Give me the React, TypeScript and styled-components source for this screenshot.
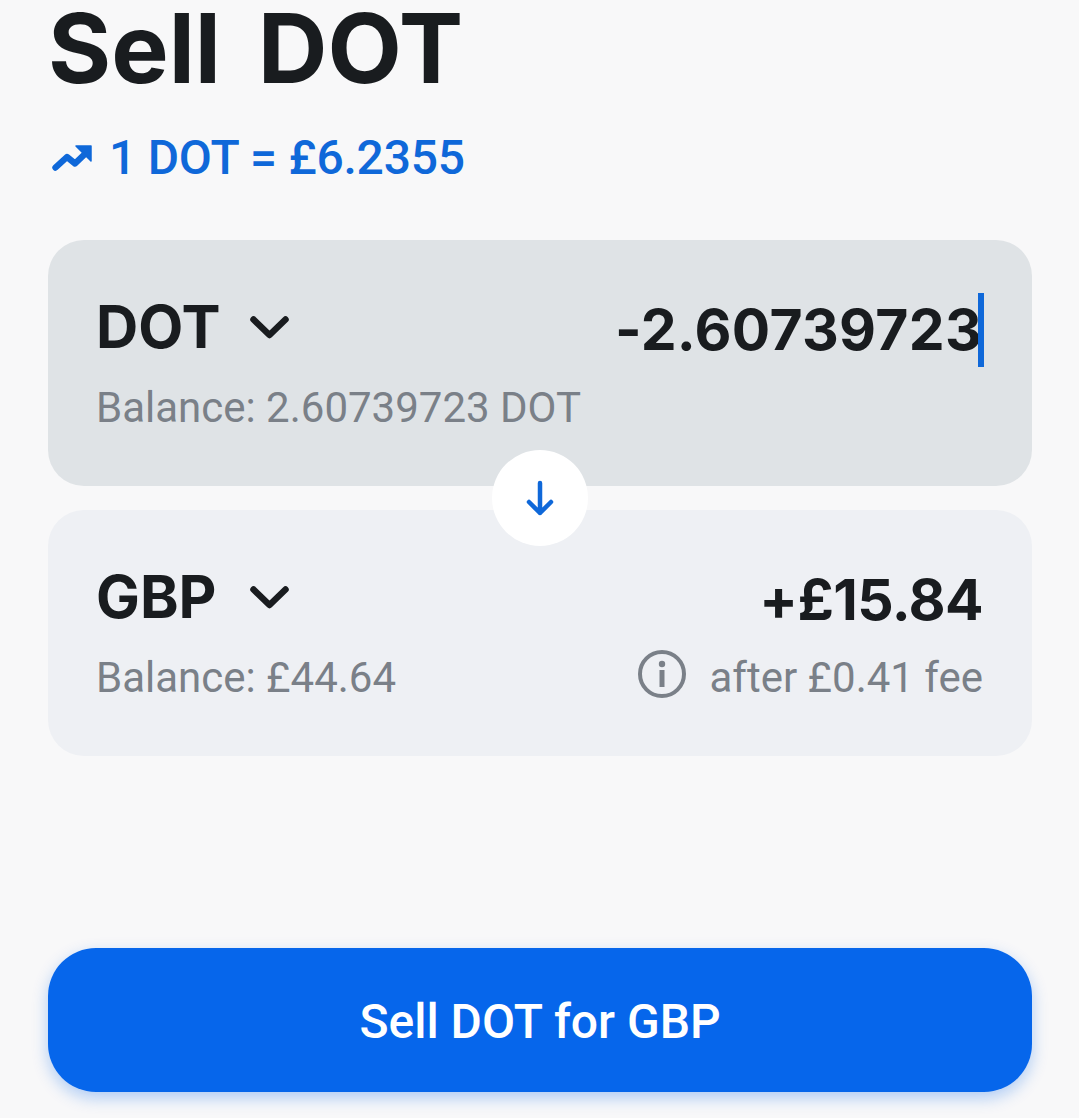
import React from "react";
import styled, { createGlobalStyle } from "styled-components";

const Global = createGlobalStyle`
  html, body { margin: 0; padding: 0; background: #f8f8f9; height: 100%; overflow: hidden; }
`;

const Page = styled.main`
  box-sizing: border-box;
  width: 1079px;
  height: 1118px;
  padding: 0 47px 0 48px;
  display: flex;
  flex-direction: column;
  overflow: hidden;
`;

const Title = styled.h1`
  margin: 0;
  height: 96px;
  font: 700 96.5px/96px Inter, sans-serif;
  word-spacing: 14px;
  color: #191c1f;
`;

const Rate = styled.div`
  margin-top: 32px;
  height: 60px;
  display: flex;
  align-items: center;
  gap: 17px;
  font: 500 48px/60px Roboto, sans-serif;
  letter-spacing: -0.25px;
  color: #0f68d9;
  padding-left: 4px;
`;

const Exchange = styled.section`
  position: relative;
  margin-top: 52px;
  display: flex;
  flex-direction: column;
  gap: 24px;
`;

const Card = styled.div<{ $active?: boolean }>`
  box-sizing: border-box;
  height: 246px;
  padding: 50px 49px 0 48px;
  border-radius: 36px;
  background: ${(p) => (p.$active ? "#dfe3e6" : "#eef0f4")};
  display: flex;
  flex-direction: column;
  gap: 16px;
`;

const Row = styled.div`
  display: flex;
  justify-content: space-between;
  align-items: flex-start;
`;

const Currency = styled.div`
  display: flex;
  align-items: center;
  gap: 32px;
  font: 700 58.5px/74px Inter, sans-serif;
  color: #191c1f;
`;

const CurrencyName = styled.span`
  width: 122px;
`;

const Amount = styled.div<{ $editing?: boolean }>`
  position: relative;
  margin-top: 3px;
  font: 700 57px/74px Inter, sans-serif;
  letter-spacing: ${(p) => (p.$editing ? "0.3px" : "-0.6px")};
  padding-right: ${(p) => (p.$editing ? "1px" : "0")};
  color: #191c1f;
`;

const Caret = styled.span`
  position: absolute;
  top: 0;
  right: -1px;
  width: 6px;
  height: 74px;
  background: #0f68d9;
`;

const Muted = styled.div`
  font: 400 42px/50px Roboto, sans-serif;
  color: #7a8088;
`;

const Fee = styled(Muted)`
  display: flex;
  align-items: flex-start;
  gap: 24px;
`;

const InfoIcon = styled.svg`
  margin-top: -3px;
`;

const SwapBadge = styled.div`
  position: absolute;
  left: 444px;
  top: 210px;
  width: 96px;
  height: 96px;
  border-radius: 50%;
  background: #fff;
  display: flex;
  align-items: center;
  justify-content: center;
`;

const Submit = styled.button`
  margin-top: 192px;
  height: 144px;
  padding: 4px 0 0;
  border: 0;
  border-radius: 48px;
  background: #0666eb;
  color: #fff;
  font: 500 48px/60px Roboto, sans-serif;
  box-shadow: 0 6px 16px rgba(6, 102, 235, 0.3);
`;

const Chevron = () => (
  <svg width="40" height="26" viewBox="0 0 40 26" fill="none" stroke="#191c1f" strokeWidth="6.5" strokeLinecap="round" strokeLinejoin="round">
    <path d="M3.5 5.5 L19.5 21 L35.5 5.5" />
  </svg>
);

const Trend = () => (
  <svg width="40" height="26" viewBox="0 0 40 26" fill="none">
    <path d="M3.5 22.5 L15 12 L23 18.5 L35 7" stroke="#0f68d9" strokeWidth="6.4" strokeLinecap="round" strokeLinejoin="round" />
    <path d="M24 1h15v15z" fill="#0f68d9" stroke="#0f68d9" strokeWidth="1.5" strokeLinejoin="round" />
  </svg>
);

const ArrowDown = () => (
  <svg width="28" height="36" viewBox="0 0 28 36" fill="none" stroke="#0f68d9" strokeWidth="4.5" strokeLinecap="round" strokeLinejoin="round">
    <path d="M14 3v30M3 22l11 11 11-11" />
  </svg>
);

const Info = () => (
  <InfoIcon width="48" height="48" viewBox="0 0 48 48" fill="none">
    <circle cx="24" cy="24" r="22" stroke="#7a8088" strokeWidth="4" />
    <circle cx="24" cy="14" r="3.2" fill="#7a8088" />
    <rect x="21.5" y="20" width="5" height="17" fill="#7a8088" />
  </InfoIcon>
);

export default function App() {
  return (
    <Page>
      <Global />
      <Title>Sell DOT</Title>
      <Rate>
        <Trend />
        <span>1 DOT = £6.2355</span>
      </Rate>
      <Exchange>
        <Card $active>
          <Row>
            <Currency>
              <CurrencyName>DOT</CurrencyName>
              <Chevron />
            </Currency>
            <Amount $editing>
              -2.60739723
              <Caret />
            </Amount>
          </Row>
          <Muted>Balance: 2.60739723 DOT</Muted>
        </Card>
        <SwapBadge>
          <ArrowDown />
        </SwapBadge>
        <Card>
          <Row>
            <Currency>
              <CurrencyName>GBP</CurrencyName>
              <Chevron />
            </Currency>
            <Amount>+£15.84</Amount>
          </Row>
          <Row>
            <Muted>Balance: £44.64</Muted>
            <Fee>
              <Info />
              after £0.41 fee
            </Fee>
          </Row>
        </Card>
      </Exchange>
      <Submit>Sell DOT for GBP</Submit>
    </Page>
  );
}
